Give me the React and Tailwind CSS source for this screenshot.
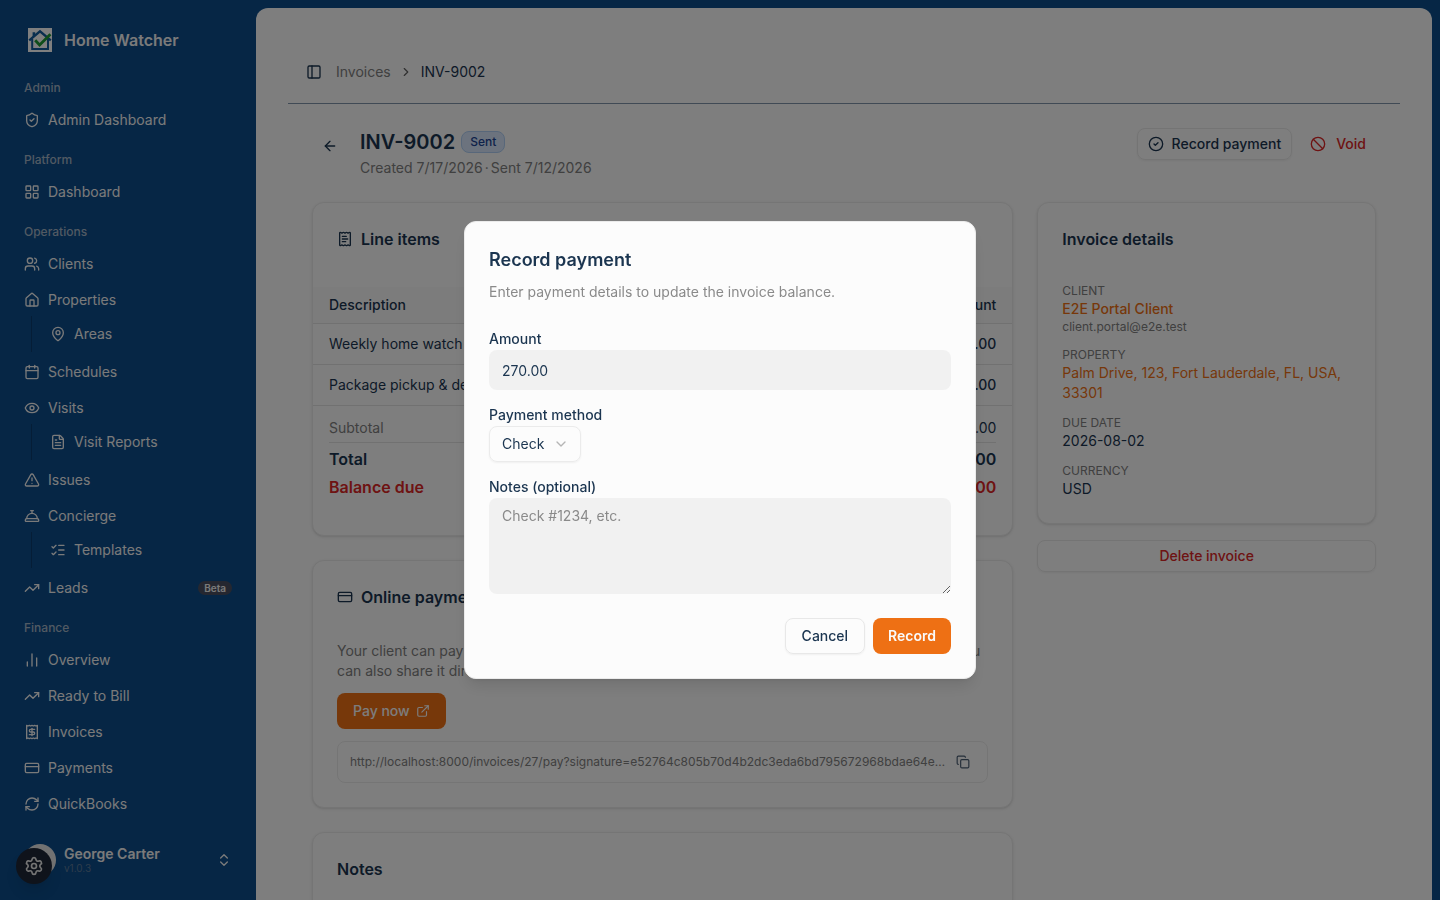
import React from "react";
import {
  ShieldCheck, LayoutGrid, Users, House, MapPin, Calendar, Eye, FileText, TriangleAlert,
  ConciergeBell, ListChecks, TrendingUp, ChartNoAxesColumn, CreditCard, RefreshCw,
  ChevronsUpDown, Settings, PanelLeft, ChevronRight, ChevronDown, ArrowLeft, CircleCheck,
  Ban, ReceiptText, ExternalLink, Copy,
} from "lucide-react";

function InvoiceIcon({ className }) {
  return (
    <svg className={className} viewBox="0 0 24 24" fill="none" stroke="currentColor" strokeWidth="2" strokeLinecap="round" strokeLinejoin="round" aria-hidden="true">
      <path d="M4 2v20l2-1 2 1 2-1 2 1 2-1 2 1 2-1 2 1V2l-2 1-2-1-2 1-2-1-2 1-2-1-2 1Z" />
      <path d="M16 8h-6a2 2 0 1 0 0 4h4a2 2 0 1 1 0 4H8" />
      <path d="M12 17.5v-11" />
    </svg>
  );
}

function Logo() {
  return (
    <svg className="size-6" viewBox="0 0 24 24" fill="none" aria-hidden="true">
      <path fill="#fff" d="M0 0h24v24H0z" />
      <path d="M4.6 9V4.2h2.6V7" fill="#125c9e" />
      <path d="M1.2 12.4 12 3.4l10.8 9" stroke="#125c9e" strokeWidth="2.4" />
      <path d="M4.2 11v10h15.8V11" stroke="#125c9e" strokeWidth="2" />
      <path d="m7.2 12.2 4.4 4.8L22.4 6.2" stroke="#1c9a35" strokeWidth="2.8" />
    </svg>
  );
}

const groups = [
  { label: "Admin", items: [{ label: "Admin Dashboard", icon: ShieldCheck }] },
  { label: "Platform", items: [{ label: "Dashboard", icon: LayoutGrid }] },
  {
    label: "Operations",
    items: [
      { label: "Clients", icon: Users },
      { label: "Properties", icon: House, sub: { label: "Areas", icon: MapPin } },
      { label: "Schedules", icon: Calendar },
      { label: "Visits", icon: Eye, sub: { label: "Visit Reports", icon: FileText } },
      { label: "Issues", icon: TriangleAlert },
      { label: "Concierge", icon: ConciergeBell, sub: { label: "Templates", icon: ListChecks } },
      { label: "Leads", icon: TrendingUp, badge: "Beta" },
    ],
  },
  {
    label: "Finance",
    items: [
      { label: "Overview", icon: ChartNoAxesColumn },
      { label: "Ready to Bill", icon: TrendingUp },
      { label: "Invoices", icon: InvoiceIcon },
      { label: "Payments", icon: CreditCard },
      { label: "QuickBooks", icon: RefreshCw },
    ],
  },
];

function NavItem({ item }) {
  const Icon = item.icon;
  return (
    <li>
      <a href="#" className="flex h-8 items-center gap-2 rounded-md px-2 text-sm">
        <Icon className="size-4 shrink-0" />
        <span className="flex-1">{item.label}</span>
        {item.badge && (
          <span className="rounded-full bg-[#4a4f60] px-1.5 text-[10px] leading-[14px] font-semibold">{item.badge}</span>
        )}
      </a>
      {item.sub && (
        <ul className="ml-[15px] border-l border-[#0a3a6c] py-1 pl-2.5">
          <li>
            <a href="#" className="flex h-7 items-center gap-2 rounded-md px-2 text-sm">
              <item.sub.icon className="size-4 shrink-0" />
              {item.sub.label}
            </a>
          </li>
        </ul>
      )}
    </li>
  );
}

function Sidebar() {
  return (
    <aside className="flex w-64 shrink-0 flex-col justify-between p-2 text-[#f5f5f5]">
      <div>
        <a href="#" className="flex h-16 items-center gap-3 px-5 text-base font-semibold">
          <Logo />
          Home Watcher
        </a>
        <nav className="flex flex-col gap-2 px-2">
          {groups.map((g) => (
            <section key={g.label}>
              <h2 className="flex h-8 items-center px-2 text-xs font-medium text-[#a3b4c6]">{g.label}</h2>
              <ul className="flex flex-col gap-1">
                {g.items.map((i) => <NavItem key={i.label} item={i} />)}
              </ul>
            </section>
          ))}
        </nav>
      </div>
      <div className="px-2 pb-2">
        <button type="button" className="flex h-12 w-full items-center gap-2 rounded-md px-2 text-left">
          <span className="size-8 rounded-full bg-[#e5e5e5]" />
          <span className="flex-1">
            <span className="block text-sm leading-4 font-semibold">George Carter</span>
            <span className="block text-[10px] leading-3 text-[#5d7a99]">v1.0.3</span>
          </span>
          <ChevronsUpDown className="size-4" />
        </button>
      </div>
    </aside>
  );
}

function Card({ children }) {
  return <section className="rounded-xl border border-[#ebebeb] bg-[#fdfdfd] shadow-sm">{children}</section>;
}

function CardTitle({ icon: Icon, children }) {
  return (
    <h2 className="flex items-center gap-2 px-6 pt-6 text-base font-semibold">
      {Icon && <Icon className="size-4" />}
      {children}
    </h2>
  );
}

function LineItems() {
  return (
    <Card>
      <CardTitle icon={ReceiptText}>Line items</CardTitle>
      <table className="mt-9 w-full text-sm">
        <thead>
          <tr className="border-b border-[#e2e2e2] bg-[#f9f9f9]">
            <th className="h-9 px-4 text-left font-medium">Description</th>
            <th className="px-4 text-right font-medium">Amount</th>
          </tr>
        </thead>
        <tbody>
          <tr className="border-b border-[#e2e2e2]">
            <td className="h-[41px] px-4">Weekly home watch visit</td>
            <td className="px-4 text-right font-medium">$180.00</td>
          </tr>
          <tr className="border-b border-[#e2e2e2]">
            <td className="h-[41px] px-4">Package pickup &amp; delivery</td>
            <td className="px-4 text-right font-medium">$90.00</td>
          </tr>
        </tbody>
      </table>
      <dl className="flex flex-col gap-1 px-4 pt-3 pb-9">
        <div className="flex justify-between text-sm">
          <dt className="text-[#808080]">Subtotal</dt>
          <dd>$270.00</dd>
        </div>
        <div className="flex justify-between border-t border-[#e2e2e2] pt-1 text-base font-semibold">
          <dt>Total</dt>
          <dd>$270.00</dd>
        </div>
        <div className="flex justify-between text-base font-semibold text-[#dc2626]">
          <dt>Balance due</dt>
          <dd>$270.00</dd>
        </div>
      </dl>
    </Card>
  );
}

function OnlinePayment() {
  return (
    <Card>
      <CardTitle icon={CreditCard}>Online payment</CardTitle>
      <div className="flex flex-col items-start gap-3 px-6 pt-8 pb-6">
        <p className="w-full text-sm text-[#808080]">
          <span className="flex justify-between pr-2">
            <span>Your client can pay this invoice online with the link in their email.</span>{" "}
            <span>You</span>
          </span>
          <span className="block">can also share it directly with them.</span>
        </p>
        <a href="#" className="flex h-9 items-center gap-1.5 rounded-lg bg-[#ee7014] px-4 text-sm font-medium text-[#fafafa]">
          Pay now
          <ExternalLink className="size-3.5" />
        </a>
        <div className="flex w-full items-center gap-1 rounded-lg border border-[#ebebeb] px-3 py-2">
          <span className="min-w-0 flex-1 truncate text-xs text-[#808080]">
            http://localhost:8000/invoices/27/pay?signature=e52764c805b70d4b2dc3eda6bd795672968bdae64e3e90b1
          </span>
          <button type="button" aria-label="Copy link" className="flex size-6 items-center justify-center">
            <Copy className="size-3.5 text-[#4a5d72]" />
          </button>
        </div>
      </div>
    </Card>
  );
}

function Detail({ label, children }) {
  return (
    <div>
      <dt className="text-xs text-[#808080] uppercase">{label}</dt>
      <dd className="text-sm">{children}</dd>
    </div>
  );
}

function InvoicePage() {
  return (
    <main className="mt-2 mr-2 min-w-0 flex-1 overflow-hidden rounded-t-xl bg-[#fcfcfc] px-8 pt-8 text-[#1b3550]">
      <header className="flex h-16 items-center gap-2 border-b border-[#8095aa] px-3">
        <button type="button" aria-label="Toggle sidebar" className="flex size-7 items-center justify-center">
          <PanelLeft className="size-4" />
        </button>
        <nav aria-label="Breadcrumb">
          <ol className="flex items-center gap-2 text-sm">
            <li><a href="#" className="text-[#808080]">Invoices</a></li>
            <li aria-hidden="true"><ChevronRight className="size-3.5 text-[#606060]" /></li>
            <li aria-current="page">INV-9002</li>
          </ol>
        </nav>
      </header>
      <div className="flex flex-col gap-6 p-6">
        <div className="flex items-start gap-3">
          <a href="#" aria-label="Back to invoices" className="flex size-9 items-center justify-center">
            <ArrowLeft className="size-4" />
          </a>
          <div className="flex flex-1 flex-col gap-0.5">
            <div className="flex items-center gap-1.5">
              <h1 className="text-xl font-semibold">INV-9002</h1>
              <span className="rounded-lg border border-[#b0cff5] bg-[#d8e7fc] px-2 py-0.5 text-xs font-medium text-[#1d4596]">Sent</span>
            </div>
            <p className="flex gap-0.5 text-sm text-[#808080]">
              <span>Created 7/17/2026</span>
              <span>·</span>
              <span>Sent 7/12/2026</span>
            </p>
          </div>
          <div className="flex gap-2">
            <button type="button" className="flex h-8 items-center gap-2 rounded-lg border border-[#e8e8e8] px-2.5 text-sm font-medium shadow-xs">
              <CircleCheck className="size-4" />
              Record payment
            </button>
            <button type="button" className="flex h-8 items-center gap-2.5 px-2.5 text-sm font-medium text-[#dc2626]">
              <Ban className="size-4" />
              Void
            </button>
          </div>
        </div>
        <div className="grid grid-cols-3 items-start gap-6">
          <div className="col-span-2 flex flex-col gap-6">
            <LineItems />
            <OnlinePayment />
            <Card>
              <CardTitle>Notes</CardTitle>
              <div className="h-24" />
            </Card>
          </div>
          <div className="flex flex-col gap-4">
            <Card>
              <CardTitle>Invoice details</CardTitle>
              <dl className="flex flex-col gap-3 px-6 pt-8 pb-6">
                <Detail label="Client">
                  <a href="#" className="block font-medium text-[#ee7014]">E2E Portal Client</a>
                  <span className="block text-xs text-[#808080]">client.portal@e2e.test</span>
                </Detail>
                <Detail label="Property">
                  <a href="#" className="block text-[#ee7014]">Palm Drive, 123, Fort Lauderdale, FL, USA, 33301</a>
                </Detail>
                <Detail label="Due date">2026-08-02</Detail>
                <Detail label="Currency">USD</Detail>
              </dl>
            </Card>
            <button type="button" className="h-8 rounded-lg border border-[#e8e8e8] text-sm font-medium text-[#dc2626] shadow-xs">
              Delete invoice
            </button>
          </div>
        </div>
      </div>
    </main>
  );
}

function RecordPaymentDialog() {
  return (
    <div className="fixed inset-0 flex items-center justify-center bg-black/50">
      <div role="dialog" aria-modal="true" aria-labelledby="dialog-title" className="w-full max-w-lg rounded-xl border border-[#ebebeb] bg-[#fcfcfc] p-6 text-[#1b3550] shadow-lg">
        <h2 id="dialog-title" className="text-lg font-semibold">Record payment</h2>
        <p className="mt-2 text-sm text-[#8a8a8a]">Enter payment details to update the invoice balance.</p>
        <form className="mt-6 flex flex-col gap-3">
          <div>
            <label htmlFor="amount" className="block pt-0.5 text-sm leading-[22px] font-medium">Amount</label>
            <input id="amount" type="text" inputMode="decimal" defaultValue="270.00" className="block h-10 w-full rounded-lg bg-[#f1f1f1] px-[13px] text-sm" />
          </div>
          <div>
            <label htmlFor="method" className="block pt-0.5 text-sm leading-[22px] font-medium">Payment method</label>
            <div className="relative w-23">
              <select id="method" className="block h-9 w-full appearance-none rounded-lg border border-[#ebebeb] bg-transparent px-3 text-sm shadow-xs">
                <option>Check</option>
              </select>
              <ChevronDown className="pointer-events-none absolute top-2.5 right-3 size-4 text-[#b5b5b5]" />
            </div>
          </div>
          <div>
            <label htmlFor="notes" className="block pt-0.5 text-sm leading-[22px] font-medium">Notes (optional)</label>
            <textarea id="notes" placeholder="Check #1234, etc." className="block h-24 w-full resize rounded-lg bg-[#f1f1f1] px-[13px] py-2 text-sm placeholder:text-[#8a8a8a]" />
          </div>
          <div className="mt-3 flex justify-end gap-2">
            <button type="button" className="h-9 rounded-lg border border-[#e8e8e8] px-4 text-sm font-medium shadow-xs">Cancel</button>
            <button type="submit" className="h-9 rounded-lg bg-[#ee7014] px-[15px] text-sm font-semibold text-[#fafafa]">Record</button>
          </div>
        </form>
      </div>
    </div>
  );
}

export default function App() {
  return (
    <div className="flex h-screen overflow-hidden bg-[#0c4c8a] font-[Inter,sans-serif]">
      <Sidebar />
      <InvoicePage />
      <button type="button" aria-label="Settings" className="fixed bottom-4 left-4 flex size-9 items-center justify-center rounded-full bg-[#1e2636] text-[#e8e8e8] shadow-lg">
        <Settings className="size-5" />
      </button>
      <RecordPaymentDialog />
    </div>
  );
}
